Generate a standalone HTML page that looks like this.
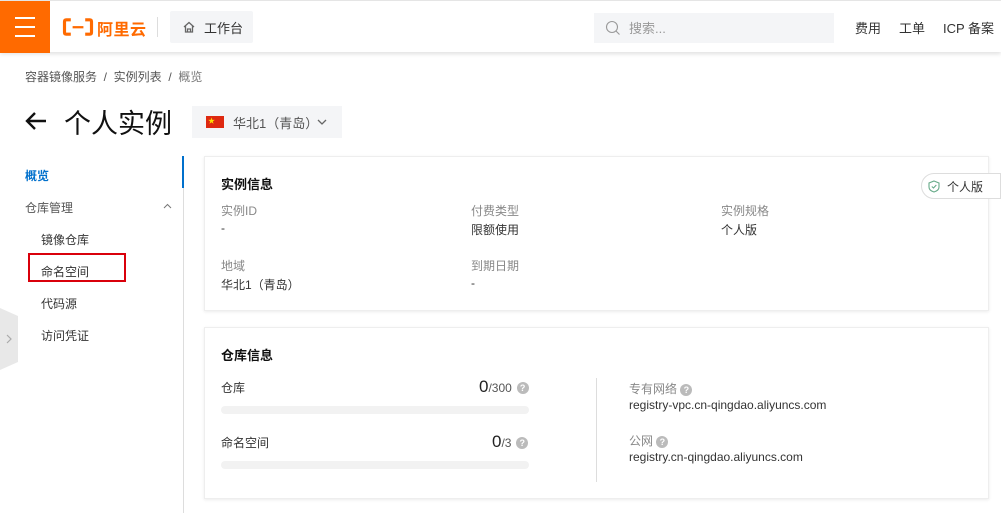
<!DOCTYPE html>
<html><head><meta charset="utf-8"><style>
*{margin:0;padding:0;box-sizing:border-box}
body{width:1001px;height:513px;overflow:hidden;background:#fff;font-family:"Liberation Sans","Noto Sans CJK SC",sans-serif;color:#333;font-size:12px;position:relative}
.a{position:absolute;white-space:nowrap}
.top{position:absolute;left:0;top:0;width:1001px;height:52px;background:#fff;box-shadow:0 2px 4px rgba(0,0,0,.12);border-top:1px solid #e5e5e5}
.ham{position:absolute;left:0;top:0;width:50px;height:52px;background:#ff6a00}
.ham i{position:absolute;left:15px;width:20px;height:2px;background:#fff}
.card{position:absolute;left:204px;width:785px;background:#fff;border:1px solid #eee;box-shadow:0 1px 3px rgba(0,0,0,.08)}
.lbl{color:#888}
.q{display:inline-block;width:12px;height:12px;border-radius:50%;background:#bbb;color:#fff;font-size:9px;text-align:center;line-height:12px;font-weight:bold;vertical-align:middle}
.bar{position:absolute;left:221px;width:308px;height:8px;border-radius:4px;background:#f2f2f2}
</style></head><body>
<div class="top">
 <div class="ham"><i style="top:16px"></i><i style="top:25px"></i><i style="top:34px"></i></div>
 <svg class="a" style="left:62px;top:17px" width="32" height="18" viewBox="0 0 34 20"><path d="M9 2H4Q2 2 2 4V16Q2 18 4 18H9M25 2H30Q32 2 32 4V16Q32 18 30 18H25" fill="none" stroke="#ff6a00" stroke-width="3.5"/><rect x="11" y="9" width="12" height="2.5" fill="#ff6a00"/></svg>
 <div class="a" style="left:97px;top:15px;font-size:16px;font-weight:bold;color:#ff6a00;letter-spacing:0.5px">阿里云</div>
 <div class="a" style="left:157px;top:16px;width:1px;height:20px;background:#ddd"></div>
 <div class="a" style="left:170px;top:10px;width:83px;height:32px;background:#f4f5f7;border-radius:2px"></div>
 <svg class="a" style="left:182px;top:19px" width="14" height="14" viewBox="0 0 14 14"><path d="M2 7L7 2.5L12 7M3.5 6V12H10.5V6M5.5 12V9H8.5V12" fill="none" stroke="#666" stroke-width="1.3"/></svg>
 <div class="a" style="left:204px;top:17px;font-size:13px;color:#333">工作台</div>
 <div class="a" style="left:594px;top:12px;width:240px;height:30px;background:#f4f5f7"></div>
 <svg class="a" style="left:605px;top:19px" width="16" height="16" viewBox="0 0 16 16"><circle cx="7" cy="7" r="5.5" fill="none" stroke="#999" stroke-width="1.1"/><path d="M11 11L14.5 14.5" stroke="#999" stroke-width="1.1"/></svg>
 <div class="a" style="left:629px;top:17px;font-size:13px;color:#999">搜索...</div>
 <div class="a" style="left:855px;top:17px;font-size:13px">费用</div>
 <div class="a" style="left:899px;top:17px;font-size:13px">工单</div>
 <div class="a" style="left:943px;top:17px;font-size:13px">ICP 备案</div>
</div>
<div class="a" style="left:25px;top:68px;color:#555">容器镜像服务 &nbsp;/&nbsp; 实例列表 &nbsp;/&nbsp; <span style="color:#777">概览</span></div>
<svg class="a" style="left:24px;top:110px" width="24" height="22" viewBox="0 0 24 22"><path d="M22 11H3M11 3L3 11L11 19" fill="none" stroke="#111" stroke-width="2.4"/></svg>
<div class="a" style="left:64px;top:102px;font-size:27px;color:#111">个人实例</div>
<div class="a" style="left:192px;top:106px;width:150px;height:32px;background:#f4f5f7"></div>
<div class="a" style="left:206px;top:116px;width:18px;height:12px;background:#de2910"><span style="position:absolute;left:2px;top:0;color:#ffde00;font-size:7px">★</span></div>
<div class="a" style="left:233px;top:113px;font-size:13px;color:#555">华北1（青岛）</div>
<svg class="a" style="left:317px;top:118px" width="10" height="8" viewBox="0 0 10 8"><path d="M1 2L5 6L9 2" fill="none" stroke="#666" stroke-width="1.3"/></svg>
<!-- sidebar -->
<div class="a" style="left:183px;top:156px;width:1px;height:357px;background:#ddd"></div>
<div class="a" style="left:182px;top:156px;width:2px;height:32px;background:#0070cc"></div>
<div class="a" style="left:25px;top:167px;color:#0070cc;font-weight:bold;font-size:12px">概览</div>
<div class="a" style="left:25px;top:199px;color:#555">仓库管理</div>
<svg class="a" style="left:163px;top:203px" width="9" height="6" viewBox="0 0 9 6"><path d="M1 5L4.5 1.5L8 5" fill="none" stroke="#777" stroke-width="1"/></svg>
<div class="a" style="left:41px;top:231px">镜像仓库</div>
<div class="a" style="left:28px;top:253px;width:98px;height:29px;border:2px solid #d9000b"></div>
<div class="a" style="left:41px;top:263px">命名空间</div>
<div class="a" style="left:41px;top:295px">代码源</div>
<div class="a" style="left:41px;top:327px">访问凭证</div>
<svg class="a" style="left:0;top:308px" width="19" height="62" viewBox="0 0 19 62"><path d="M0 0L18 8V54L0 62Z" fill="#e8e8e8"/><path d="M7 27L11 31L7 35" fill="none" stroke="#aaa" stroke-width="1.2"/></svg>
<!-- card1 -->
<div class="card" style="top:156px;height:155px"></div>
<div class="a" style="left:221px;top:174px;font-size:13px;font-weight:bold;color:#111">实例信息</div>
<div class="a" style="left:921px;top:173px;width:80px;height:26px;border:1px solid #ddd;border-radius:13px 0 0 13px;background:#fff"></div>
<svg class="a" style="left:928px;top:180px" width="12" height="13" viewBox="0 0 12 13"><path d="M6 1L11 3V7Q11 10.5 6 12Q1 10.5 1 7V3Z" fill="none" stroke="#6a8" stroke-width="1.1"/><path d="M3.8 6.5L5.5 8L8.3 5" fill="none" stroke="#6a8" stroke-width="1.1"/></svg>
<div class="a" style="left:947px;top:178px">个人版</div>
<div class="a lbl" style="left:221px;top:202px">实例ID</div>
<div class="a" style="left:221px;top:221px">-</div>
<div class="a lbl" style="left:471px;top:202px">付费类型</div>
<div class="a" style="left:471px;top:221px">限额使用</div>
<div class="a lbl" style="left:721px;top:202px">实例规格</div>
<div class="a" style="left:721px;top:221px">个人版</div>
<div class="a lbl" style="left:221px;top:257px">地域</div>
<div class="a" style="left:221px;top:276px">华北1（青岛）</div>
<div class="a lbl" style="left:471px;top:257px">到期日期</div>
<div class="a" style="left:471px;top:276px">-</div>
<!-- card2 -->
<div class="card" style="top:327px;height:172px"></div>
<div class="a" style="left:221px;top:345px;font-size:13px;font-weight:bold;color:#111">仓库信息</div>
<div class="a" style="left:221px;top:379px">仓库</div>
<div class="a" style="left:479px;top:377px;font-size:17px;color:#222">0<span style="font-size:12px;color:#555">/300</span> <span class="q">?</span></div>
<div class="bar" style="top:406px"></div>
<div class="a" style="left:221px;top:434px">命名空间</div>
<div class="a" style="left:492px;top:432px;font-size:17px;color:#222">0<span style="font-size:12px;color:#555">/3</span> <span class="q">?</span></div>
<div class="bar" style="top:461px"></div>
<div class="a" style="left:596px;top:378px;width:1px;height:104px;background:#ddd"></div>
<div class="a lbl" style="left:629px;top:380px">专有网络 <span class="q">?</span></div>
<div class="a" style="left:629px;top:398px">registry-vpc.cn-qingdao.aliyuncs.com</div>
<div class="a lbl" style="left:629px;top:432px">公网 <span class="q">?</span></div>
<div class="a" style="left:629px;top:450px">registry.cn-qingdao.aliyuncs.com</div>
</body></html>
